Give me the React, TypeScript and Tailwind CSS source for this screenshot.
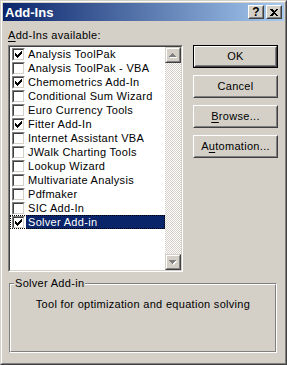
import React from "react";

const items: { name: string; checked: boolean }[] = [
  { name: "Analysis ToolPak", checked: true },
  { name: "Analysis ToolPak - VBA", checked: false },
  { name: "Chemometrics Add-In", checked: true },
  { name: "Conditional Sum Wizard", checked: false },
  { name: "Euro Currency Tools", checked: false },
  { name: "Fitter Add-In", checked: true },
  { name: "Internet Assistant VBA", checked: false },
  { name: "JWalk Charting Tools", checked: false },
  { name: "Lookup Wizard", checked: false },
  { name: "Multivariate Analysis", checked: false },
  { name: "Pdfmaker", checked: false },
  { name: "SIC Add-In", checked: false },
  { name: "Solver Add-in", checked: true },
];

const font = "font-['Tahoma','Liberation_Sans',sans-serif]";

function CheckMark() {
  // 7x7 classic check glyph
  const px = [
    [6, 0],
    [5, 1], [6, 1],
    [0, 2], [4, 2], [5, 2], [6, 2],
    [0, 3], [1, 3], [3, 3], [4, 3], [5, 3],
    [0, 4], [1, 4], [2, 4], [3, 4], [4, 4],
    [1, 5], [2, 5], [3, 5],
    [2, 6],
  ];
  return (
    <svg width="7" height="7" viewBox="0 0 7 7" shapeRendering="crispEdges">
      {px.map(([x, y], i) => (
        <rect key={i} x={x} y={y} width="1" height="1" fill="#000" />
      ))}
    </svg>
  );
}

function CheckBox({ checked }: { checked: boolean }) {
  return (
    <div className="w-[13px] h-[13px] shrink-0 border border-t-[#808080] border-l-[#808080] border-r-white border-b-white">
      <div className="w-full h-full border border-t-[#404040] border-l-[#404040] border-r-[#d4d0c8] border-b-[#d4d0c8] bg-white flex items-center justify-center">
        {checked && <CheckMark />}
      </div>
    </div>
  );
}

function Arrow({ down }: { down?: boolean }) {
  return (
    <svg width="8" height="5" viewBox="0 0 8 5" shapeRendering="crispEdges">
      {down ? (
        <>
          <path d="M1 1h7v1h-1v1h-1v1h-1v1h-1v-1h-1v-1h-1v-1h-1z" fill="#ffffff" />
          <path d="M0 0h7v1h-1v1h-1v1h-1v1h-1v-1h-1v-1h-1v-1h-1z" fill="#808080" />
        </>
      ) : (
        <>
          <path d="M1 5h7v-1h-1v-1h-1v-1h-1v-1h-1v1h-1v1h-1v1h-1z" fill="#ffffff" />
          <path d="M0 4h7v-1h-1v-1h-1v-1h-1v-1h-1v1h-1v1h-1v1h-1z" fill="#808080" />
        </>
      )}
    </svg>
  );
}

function ScrollButton({ down }: { down?: boolean }) {
  return (
    <div className="w-[16px] h-[16px] border border-t-[#d4d0c8] border-l-[#d4d0c8] border-r-[#404040] border-b-[#404040]">
      <div className="w-full h-full border border-t-white border-l-white border-r-[#808080] border-b-[#808080] bg-[#d4d0c8] flex items-center justify-center">
        <Arrow down={down} />
      </div>
    </div>
  );
}

function Button({ children, isDefault }: { children: React.ReactNode; isDefault?: boolean }) {
  const inner = (
    <div className="w-full h-full border border-t-white border-l-white border-r-[#404040] border-b-[#404040]">
      <div className="w-full h-full border border-t-[#d4d0c8] border-l-[#d4d0c8] border-r-[#808080] border-b-[#808080] flex items-center justify-center text-[11px] text-black">
        {children}
      </div>
    </div>
  );
  return (
    <div className={`w-[85px] h-[23px] ${isDefault ? "border border-black" : ""}`}>{inner}</div>
  );
}

function TitleButton({ children }: { children: React.ReactNode }) {
  return (
    <div className="w-[16px] h-[14px] border border-t-white border-l-white border-r-[#404040] border-b-[#404040] bg-[#d4d0c8]">
      <div className="w-full h-full border border-t-[#d4d0c8] border-l-[#d4d0c8] border-r-[#808080] border-b-[#808080] flex items-center justify-center text-[12px] font-bold leading-none text-black">
        {children}
      </div>
    </div>
  );
}

export default function App() {
  return (
    <div className={`w-[287px] h-[365px] bg-[#d4d0c8] ${font} text-[11px] tracking-[0.3px] text-black`}>
      <div className="w-full h-full border border-t-[#d4d0c8] border-l-[#d4d0c8] border-r-[#404040] border-b-[#404040]">
        <div className="w-full h-full border border-t-white border-l-white border-r-[#808080] border-b-[#808080] p-[1px] flex flex-col">
          {/* Title bar */}
          <div className="h-[18px] shrink-0 flex items-center justify-between pl-[2px] pr-[2px] bg-[linear-gradient(to_right,#0a246a,#a6caf0)]">
            <span className="text-white font-bold text-[13px] tracking-normal leading-none">Add-Ins</span>
            <div className="flex gap-[2px]">
              <TitleButton>?</TitleButton>
              <TitleButton>
                <svg width="8" height="7" viewBox="0 0 8 7" shapeRendering="crispEdges">
                  <path d="M0 0h2l2 2 2-2h2L5 3.5 8 7H6L4 5 2 7H0l3-3.5z" fill="#000" />
                </svg>
              </TitleButton>
            </div>
          </div>

          {/* Body */}
          <div className="flex-1 flex flex-col pl-[5px] pr-[6px] pt-[7px]">
            <div className="flex gap-[10px]">
              <div className="flex flex-col w-[175px]">
                <div className="h-[14px] leading-[14px] mb-[3px]">
                  <span className="underline underline-offset-[2px]">A</span>dd-Ins available:
                </div>
                <div className="h-[227px] border border-t-[#808080] border-l-[#808080] border-r-white border-b-white">
                  <div className="w-full h-full border border-t-[#404040] border-l-[#404040] border-r-[#d4d0c8] border-b-[#d4d0c8] bg-white flex">
                    <div className="flex-1 flex flex-col">
                      {items.map((it, i) => {
                        const selected = i === items.length - 1;
                        return (
                          <div
                            key={it.name}
                            className={`h-[14px] flex items-center pl-[2px] ${selected ? "outline outline-1 outline-dotted outline-black -outline-offset-1" : ""}`}
                          >
                            <CheckBox checked={it.checked} />
                            <span
                              className={`ml-[1px] h-[14px] leading-[14px] px-[2px] whitespace-nowrap ${selected ? "bg-[#0a246a] text-white flex-1" : ""}`}
                            >
                              {it.name}
                            </span>
                          </div>
                        );
                      })}
                    </div>
                    <div className="w-[16px] flex flex-col bg-[repeating-conic-gradient(#ffffff_0%_25%,#d4d0c8_0%_50%)] [background-size:2px_2px]">
                      <ScrollButton />
                      <div className="flex-1" />
                      <ScrollButton down />
                    </div>
                  </div>
                </div>
              </div>

              <div className="flex flex-col gap-[7px] pt-[17px]">
                <Button isDefault>OK</Button>
                <Button>Cancel</Button>
                <Button>
                  <span>
                    <span className="underline underline-offset-[2px]">B</span>rowse...
                  </span>
                </Button>
                <Button>
                  <span>
                    A<span className="underline underline-offset-[2px]">u</span>tomation...
                  </span>
                </Button>
              </div>
            </div>

            {/* Group box */}
            <div className="relative mt-[11px] ml-[1px] h-[70px] w-[268px] border border-t-[#808080] border-l-[#808080] border-r-white border-b-white">
              <div className="w-full h-full border border-t-white border-l-white border-r-[#808080] border-b-[#808080] flex justify-center pt-[11px]">
                <span>Tool for optimization and equation solving</span>
              </div>
              <span className="absolute left-[4px] -top-[8px] px-[1px] bg-[#d4d0c8] leading-[14px]">Solver Add-in</span>
            </div>
          </div>
        </div>
      </div>
    </div>
  );
}
